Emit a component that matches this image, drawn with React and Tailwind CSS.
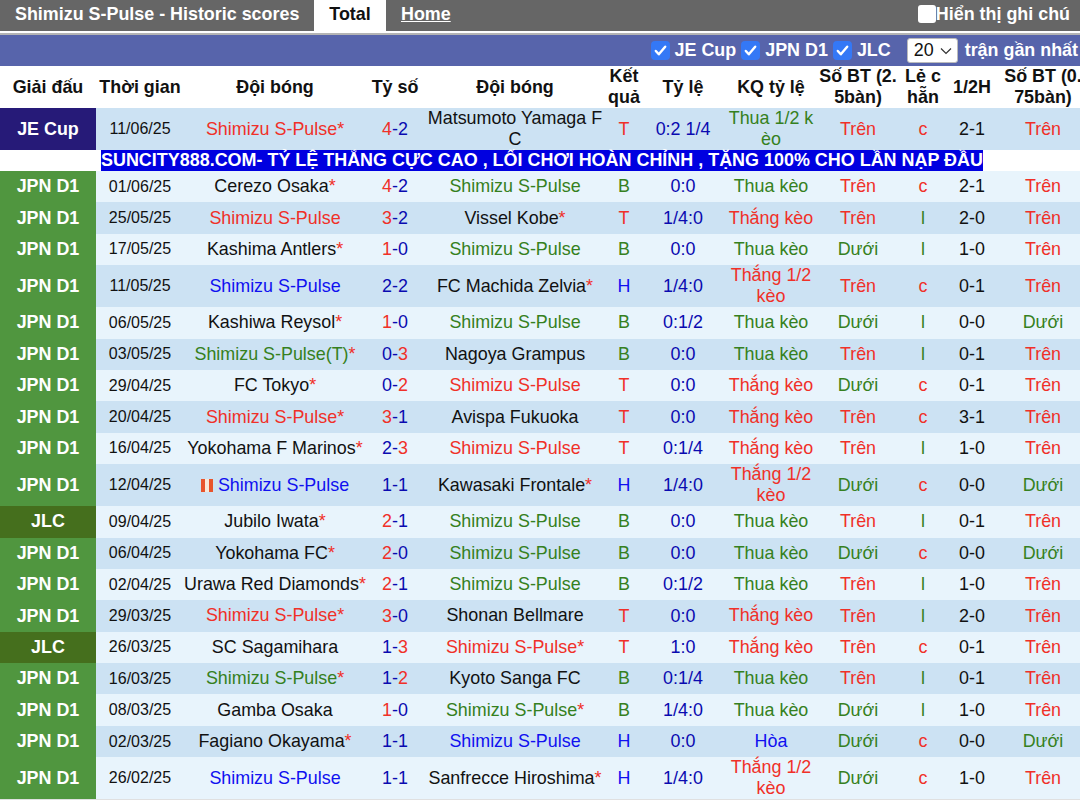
const R = "text-[#f03028]", G = "text-[#358020]", B = "text-[#0a0ab0]", U = "text-[#1010f0]", K = "text-[#111111]";
const S = 31.4, D = 41.6;
const rows = [
  ["JE Cup","11/06/25","Shimizu S-Pulse",R,1,"4-2",0,"Matsumoto Yamaga F C",K,0,"T","0:2 1/4","Thua 1/2 kèo","Trên","c","2-1","Trên",D],
  ["JPN D1","01/06/25","Cerezo Osaka",K,1,"4-2",0,"Shimizu S-Pulse",G,0,"B","0:0","Thua kèo","Trên","c","2-1","Trên",S],
  ["JPN D1","25/05/25","Shimizu S-Pulse",R,0,"3-2",0,"Vissel Kobe",K,1,"T","1/4:0","Thắng kèo","Trên","l","2-0","Trên",S],
  ["JPN D1","17/05/25","Kashima Antlers",K,1,"1-0",0,"Shimizu S-Pulse",G,0,"B","0:0","Thua kèo","Dưới","l","1-0","Trên",S],
  ["JPN D1","11/05/25","Shimizu S-Pulse",U,0,"2-2",-1,"FC Machida Zelvia",K,1,"H","1/4:0","Thắng 1/2 kèo","Trên","c","0-1","Trên",D],
  ["JPN D1","06/05/25","Kashiwa Reysol",K,1,"1-0",0,"Shimizu S-Pulse",G,0,"B","0:1/2","Thua kèo","Dưới","l","0-0","Dưới",S],
  ["JPN D1","03/05/25","Shimizu S-Pulse(T)",G,1,"0-3",1,"Nagoya Grampus",K,0,"B","0:0","Thua kèo","Trên","l","0-1","Trên",S],
  ["JPN D1","29/04/25","FC Tokyo",K,1,"0-2",1,"Shimizu S-Pulse",R,0,"T","0:0","Thắng kèo","Dưới","c","0-1","Trên",S],
  ["JPN D1","20/04/25","Shimizu S-Pulse",R,1,"3-1",0,"Avispa Fukuoka",K,0,"T","0:0","Thắng kèo","Trên","c","3-1","Trên",S],
  ["JPN D1","16/04/25","Yokohama F Marinos",K,1,"2-3",1,"Shimizu S-Pulse",R,0,"T","0:1/4","Thắng kèo","Trên","l","1-0","Trên",S],
  ["JPN D1","12/04/25","Shimizu S-Pulse",U,0,"1-1",-1,"Kawasaki Frontale",K,1,"H","1/4:0","Thắng 1/2 kèo","Dưới","c","0-0","Dưới",D,true],
  ["JLC","09/04/25","Jubilo Iwata",K,1,"2-1",0,"Shimizu S-Pulse",G,0,"B","0:0","Thua kèo","Trên","l","0-1","Trên",S],
  ["JPN D1","06/04/25","Yokohama FC",K,1,"2-0",0,"Shimizu S-Pulse",G,0,"B","0:0","Thua kèo","Dưới","c","0-0","Dưới",S],
  ["JPN D1","02/04/25","Urawa Red Diamonds",K,1,"2-1",0,"Shimizu S-Pulse",G,0,"B","0:1/2","Thua kèo","Trên","l","1-0","Trên",S],
  ["JPN D1","29/03/25","Shimizu S-Pulse",R,1,"3-0",0,"Shonan Bellmare",K,0,"T","0:0","Thắng kèo","Trên","l","2-0","Trên",S],
  ["JLC","26/03/25","SC Sagamihara",K,0,"1-3",1,"Shimizu S-Pulse",R,1,"T","1:0","Thắng kèo","Trên","c","0-1","Trên",S],
  ["JPN D1","16/03/25","Shimizu S-Pulse",G,1,"1-2",1,"Kyoto Sanga FC",K,0,"B","0:1/4","Thua kèo","Trên","l","0-1","Trên",S],
  ["JPN D1","08/03/25","Gamba Osaka",K,0,"1-0",0,"Shimizu S-Pulse",G,1,"B","1/4:0","Thua kèo","Dưới","l","1-0","Trên",S],
  ["JPN D1","02/03/25","Fagiano Okayama",K,1,"1-1",-1,"Shimizu S-Pulse",U,0,"H","0:0","Hòa","Dưới","c","0-0","Dưới",S],
  ["JPN D1","26/02/25","Shimizu S-Pulse",U,0,"1-1",-1,"Sanfrecce Hiroshima",K,1,"H","1/4:0","Thắng 1/2 kèo","Dưới","c","1-0","Trên",D],
];

const leagueBg = { "JE Cup": "bg-[#261a78]", "JPN D1": "bg-[#50963f]", JLC: "bg-[#456f1d]" };
const resultColor = { T: R, B: G, H: U };
const kqColor = (s) => (s.startsWith("Thua") ? G : s.startsWith("Hòa") ? U : R);
const ouColor = (s) => (s === "Trên" ? R : G);

function Team({ name, color, star, flag }) {
  return (
    <td className={`text-[17.9px] leading-[21px] text-center break-all ${color}`}>
      {flag ? (
        <span className="inline-flex justify-center align-[-1px] w-[12px] h-[13px] mr-[5px] bg-[#e8542c]">
          <span className="block w-[4px] h-full bg-[#f8e8d8]" />
        </span>
      ) : null}
      {name}
      {star ? <span className={R}>*</span> : null}
    </td>
  );
}

function Score({ s, hi }) {
  const [a, b] = s.split("-");
  return (
    <td className={`text-[17.9px] text-center ${B}`}>
      <span className={hi === 0 ? R : ""}>{a}</span>-<span className={hi === 1 ? R : ""}>{b}</span>
    </td>
  );
}

function Tick() {
  return (
    <span className="inline-flex items-center justify-center w-[19px] h-[19px] rounded-[4px] bg-[#3478f6] mr-[5px]">
      <svg viewBox="0 0 16 16" className="w-[15px] h-[15px]" fill="none" stroke="white" strokeWidth="2.6" strokeLinecap="round" strokeLinejoin="round"><path d="M3 8.5l3.2 3.5L13 4" /></svg>
    </span>
  );
}

function Row({ r, i }) {
  const bg = i % 2 === 0 ? "bg-[#cce2f3]" : "bg-[#e8f4fc]";
  return (
    <tr className={bg} style={{ height: r[17] }}>
      <td className={`text-[17.9px] font-bold text-white text-center ${leagueBg[r[0]]}`}>{r[0]}</td>
      <td className={`text-[16px] text-center ${K}`}>{r[1]}</td>
      <Team name={r[2]} color={r[3]} star={r[4]} flag={r[18]} />
      <Score s={r[5]} hi={r[6]} />
      <Team name={r[7]} color={r[8]} star={r[9]} />
      <td className={`text-[17.9px] text-center ${resultColor[r[10]]}`}>{r[10]}</td>
      <td className={`text-[17.9px] text-center ${B}`}>{r[11]}</td>
      <td className={`text-[17.9px] leading-[21px] text-center break-all ${kqColor(r[12])}`}>{r[12]}</td>
      <td className={`text-[17.9px] text-center ${ouColor(r[13])}`}>{r[13]}</td>
      <td className={`text-[17.9px] text-center ${r[14] === "c" ? R : G}`}>{r[14]}</td>
      <td className={`text-[17.9px] text-center ${K}`}>{r[15]}</td>
      <td className={`text-[17.9px] text-center ${ouColor(r[16])}`}>{r[16]}</td>
    </tr>
  );
}

const heads = [["Giải đấu"], ["Thời gian"], ["Đội bóng"], ["Tỷ số"], ["Đội bóng"], ["Kết", "quả"], ["Tỷ lệ"], ["KQ tỷ lệ"], ["Số BT (2.", "5bàn)"], ["Lẻ c", "hẵn"], ["1/2H"], ["Số BT (0.", "75bàn)"]];
const widths = ["w-[96px]", "w-[88px]", "w-[182px]", "w-[58px]", "w-[182px]", "w-[36px]", "w-[82px]", "w-[94px]", "w-[80px]", "w-[50px]", "w-[48px]", "w-[94px]"];

export default function App() {
  return (
    <div className="w-[1080px] h-[800px] overflow-hidden bg-white font-['Liberation_Sans',Arial,sans-serif]">
      <div className="w-[1080px] h-[31px] bg-[#666666] flex items-center text-[17.9px] font-bold text-white">
        <span className="ml-[15px] w-[299px] pb-[2px]">Shimizu S-Pulse - Historic scores</span>
        <span className="w-[72px] h-full bg-white text-[#111111] flex items-center justify-center pb-[2px]">Total</span>
        <a className="ml-[15px] underline pb-[2px]">Home</a>
        <span className="ml-auto mr-[10px] flex items-center pb-[2px]">
          <span className="w-[18px] h-[18px] bg-white rounded-[3px]" />
          Hiển thị ghi chú
        </span>
      </div>
      <div className="h-[2px] bg-white" />
      <div className="h-[2px] bg-[#b4b4b4]" />
      <div className="w-[1080px] h-[31px] bg-[#5764ab] flex items-center justify-end text-[17.9px] font-bold text-white whitespace-nowrap">
        <Tick /><span className="mr-[5px]">JE Cup</span>
        <Tick /><span className="mr-[5px]">JPN D1</span>
        <Tick /><span>JLC</span>
        <span className="ml-[16px] mr-[7px] w-[51px] h-[25px] bg-white rounded-[3px] border border-[#bbbbbb] flex items-center justify-between pl-[6px] pr-[5px] font-normal text-[#111111]">
          20
          <svg viewBox="0 0 12 8" className="w-[12px] h-[8px]" fill="none" stroke="#333" strokeWidth="1.2"><path d="M1 1.5l5 5 5-5" /></svg>
        </span>
        <span className="mr-[2px]">trận gần nhất</span>
      </div>
      <table className="table-fixed border-collapse w-[1090px]">
        <colgroup>{widths.map((w, i) => <col key={i} className={w} />)}</colgroup>
        <thead>
          <tr className="h-[42px]">
            {heads.map((h, i) => (
              <th key={i} className="text-[17.9px] leading-[21px] font-bold text-center text-[#111111] whitespace-nowrap p-0">
                {h.map((t, j) => <div key={j}>{t}</div>)}
              </th>
            ))}
          </tr>
        </thead>
        <tbody>
          <Row r={rows[0]} i={0} />
          <tr className="h-[21px]">
            <td colSpan={12} className="p-0 pl-[101px] text-left leading-[21px]">
              <span className="inline-block bg-[#0000e0] text-white text-[17.95px] font-bold leading-[21px] whitespace-nowrap">SUNCITY888.COM- TỶ LỆ THẮNG CỰC CAO , LỐI CHƠI HOÀN CHỈNH , TẶNG 100% CHO LẦN NẠP ĐẦU</span>
            </td>
          </tr>
          {rows.slice(1).map((r, i) => <Row key={i} r={r} i={i + 1} />)}
        </tbody>
      </table>
      <div className="h-[2px] bg-[#e0e0e0]" />
    </div>
  );
}
